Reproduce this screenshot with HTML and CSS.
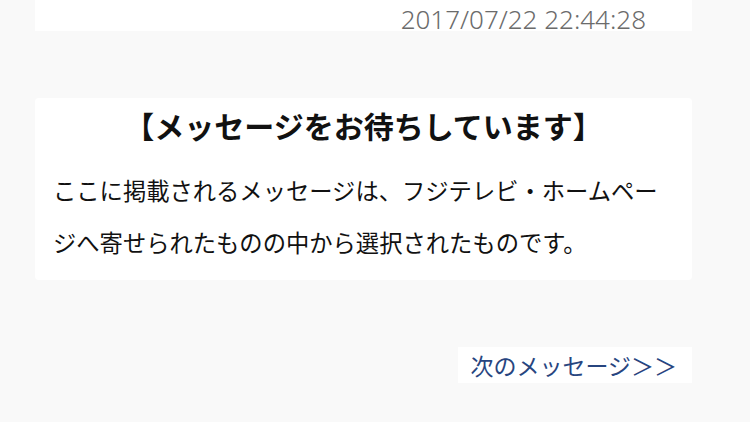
FILE: index.html
```html
<!DOCTYPE html>
<html lang="ja">
<head>
<meta charset="utf-8">
<link rel="stylesheet" href="styles.css">
</head>
<body>
<div class="page">
  <div class="meta-card">
    <span class="date">2017/07/22 22:44:28</span>
  </div>
  <div class="notice-card">
    <h2 class="notice-title">【メッセージをお待ちしています】</h2>
    <p class="notice-body">ここに掲載されるメッセージは、フジテレビ・ホームページへ寄せられたものの中から選択されたものです。</p>
  </div>
  <div class="nav-row">
    <a class="next-link" href="#">次のメッセージ＞＞</a>
  </div>
</div>
</body>
</html>
```
FILE: styles.css
```css
html, body {
  margin: 0;
  padding: 0;
  background: #f9f9f9;
}
body {
  font-family: "Noto Sans CJK JP", "Noto Sans", sans-serif;
  color: #111;
}
.page {
  margin: 0 58px 0 35px;
  display: flex;
  flex-direction: column;
}
.meta-card {
  background: #fff;
  height: 31px;
  display: flex;
  justify-content: flex-end;
  align-items: flex-end;
  padding-right: 46px;
}
.date {
  font-family: "Noto Sans", sans-serif;
  font-weight: 300;
  font-size: 26px;
  line-height: 26px;
  color: #6b6b6b;
  position: relative;
  top: 1px;
}
.notice-card {
  margin-top: 67px;
  background: #fff;
  border-radius: 4px;
  padding: 7px 18px 12px;
}
.notice-title {
  margin: 0;
  text-align: center;
  font-size: 30px;
  line-height: 40px;
  font-weight: 700;
  color: #111;
}
.notice-body {
  margin: 19px 0 0;
  font-size: 23.3px;
  line-height: 52px;
  color: #111;
}
.nav-row {
  margin-top: 67px;
  display: flex;
  justify-content: flex-end;
}
.next-link {
  background: #fff;
  height: 36px;
  line-height: 36px;
  padding: 0 15px 0 12px;
  font-size: 23px;
  color: #27457f;
  text-decoration: none;
}
```
